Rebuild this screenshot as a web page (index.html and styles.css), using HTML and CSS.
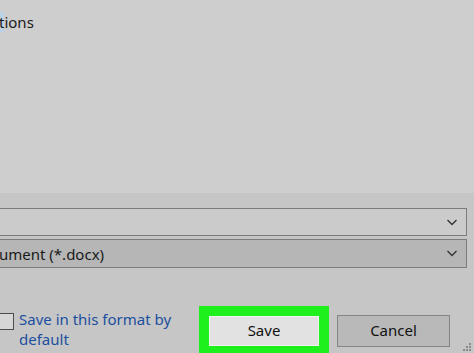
FILE: index.html
```html
<!DOCTYPE html>
<html>
<head>
<meta charset="utf-8">
<link rel="stylesheet" href="styles.css">
</head>
<body>
<div class="window">
  <div class="top">
    <div class="opt"><span class="sel">t</span>ions</div>
  </div>
  <div class="band">
    <div class="combo c1">
      <span class="ctext"></span>
      <svg class="chev" width="12" height="7" viewBox="0 0 12 7"><polyline points="1.5,1 6,5.5 10.5,1" fill="none" stroke="#333" stroke-width="1.3"/></svg>
    </div>
    <div class="combo c2">
      <span class="ctext">ument (*.docx)</span>
      <svg class="chev" width="12" height="7" viewBox="0 0 12 7"><polyline points="1.5,1 6,5.5 10.5,1" fill="none" stroke="#333" stroke-width="1.3"/></svg>
    </div>
    <div class="actions">
      <div class="check">
        <span class="box"></span>
        <span class="label">Save in this format by default</span>
      </div>
      <button class="btn save">Save</button>
      <button class="btn cancel">Cancel</button>
    </div>
    <div class="grip">
      <svg width="10" height="10" viewBox="0 0 10 10" fill="#8a8a8a">
        <rect x="7" y="1" width="2" height="2"/>
        <rect x="4" y="4" width="2" height="2"/><rect x="7" y="4" width="2" height="2"/>
        <rect x="1" y="7" width="2" height="2"/><rect x="4" y="7" width="2" height="2"/><rect x="7" y="7" width="2" height="2"/>
      </svg>
    </div>
  </div>
</div>
</body>
</html>
```
FILE: styles.css
```css
html, body {
  margin: 0;
  padding: 0;
}
body {
  width: 474px;
  height: 353px;
  overflow: hidden;
  background: #cdcdcd;
  font-family: "Noto Sans", "Open Sans", sans-serif;
  font-size: 15px;
  color: #1a1a1a;
}
.window {
  display: flex;
  flex-direction: column;
  height: 353px;
}
.top {
  height: 193px;
  box-sizing: border-box;
  padding-top: 11px;
  background: #cecece;
}
.opt {
  line-height: 22px;
  margin-left: -1px;
}
.sel {
  background: #bcd3e6;
}
.band {
  flex: 1;
  position: relative;
  background: #c6c6c6;
  padding-top: 15px;
}
.combo {
  display: flex;
  align-items: center;
  justify-content: space-between;
  box-sizing: border-box;
  width: 468px;
  margin-left: -1px;
  border: 1px solid #7c7c7c;
  padding: 0 8px 0 0;
}
.c1 {
  height: 28px;
  background: #cbcbcb;
}
.c2 {
  height: 29px;
  margin-top: 3px;
  background: #b6b6b6;
}
.ctext {
  line-height: 20px;
  margin-left: -1px;
}
.chev {
  display: block;
}
.actions {
  display: flex;
  align-items: flex-start;
  margin-top: 45px;
}
.check {
  display: flex;
  align-items: flex-start;
  width: 209px;
  flex: none;
}
.box {
  display: block;
  width: 13px;
  height: 15px;
  margin-left: -1px;
  border: 1px solid #4d4d4d;
  background: #d6d6d6;
  flex: none;
}
.label {
  display: block;
  width: 165px;
  margin-left: 5px;
  color: #1c4f9e;
  line-height: 20px;
  margin-top: -4px;
}
.btn {
  font-family: inherit;
  font-size: 15px;
  color: #111;
  box-sizing: border-box;
  padding: 0 0 3px 0;
  flex: none;
}
.save {
  width: 110px;
  height: 30px;
  margin-top: 3px;
  background: #e2e2e2;
  border: 1px solid #f2f2f2;
  outline: 10px solid #1ef01e;
}
.cancel {
  width: 113px;
  height: 32px;
  margin-left: 18px;
  margin-top: 2px;
  background: #b9b9b9;
  border: 1px solid #848484;
}
.grip {
  position: absolute;
  right: 2px;
  bottom: 1px;
  line-height: 0;
}
```
